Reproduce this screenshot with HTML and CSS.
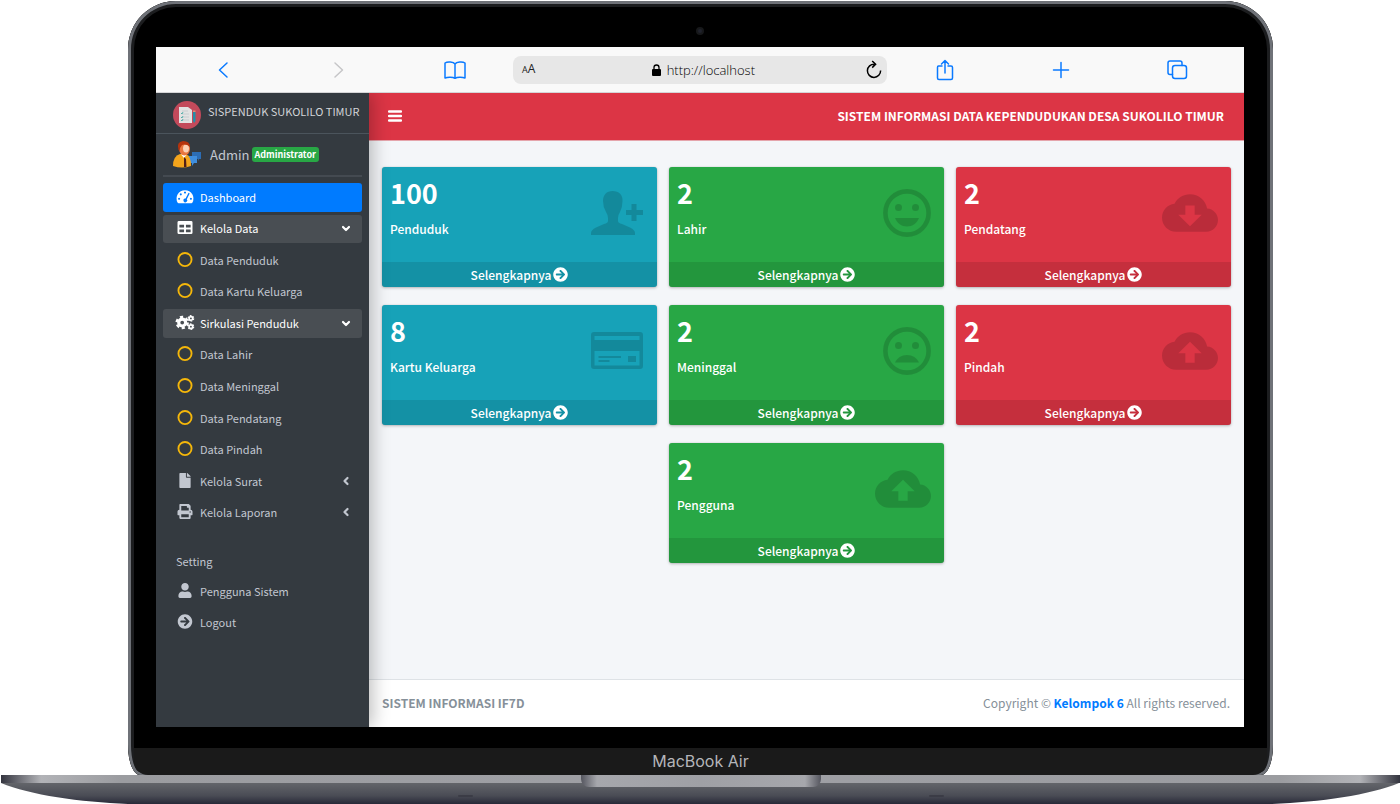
FILE: index.html
```html
<!DOCTYPE html>
<html lang="id">
<head>
<meta charset="utf-8">
<title>Sistem Informasi Data Kependudukan</title>
<meta name="viewport" content="width=device-width, initial-scale=1">
<link rel="stylesheet" href="styles.css">
</head>
<body>
<svg class="defs" aria-hidden="true">
  <symbol id="go" viewBox="0 0 512 512"><path d="M256 8c137 0 248 111 248 248S393 504 256 504 8 393 8 256 119 8 256 8zm-28.900 143.600l75.500 72.400H120c-13.300 0-24 10.700-24 24v16c0 13.300 10.700 24 24 24h182.600l-75.500 72.400c-9.700 9.300-9.900 24.800-.4 34.300l11 10.900c9.400 9.400 24.600 9.400 33.900 0L404.300 273c9.400-9.400 9.400-24.600 0-33.900L271.600 106.300c-9.400-9.400-24.600-9.400-33.900 0l-11 10.900c-9.500 9.600-9.300 25.100.4 34.400z"/></symbol>
  <symbol id="ring" viewBox="0 0 16 16"><circle cx="8" cy="8" r="7" fill="none" stroke="#f5b70a" stroke-width="2"/></symbol>
  <symbol id="down" viewBox="0 0 10 10"><path d="M2 4L5 7L8 4" fill="none" stroke="currentColor" stroke-width="2.200" stroke-linecap="round" stroke-linejoin="round"/></symbol>
  <symbol id="left" viewBox="0 0 10 10"><path d="M6.500 2L3.500 5L6.500 8" fill="none" stroke="currentColor" stroke-width="2.200" stroke-linecap="round" stroke-linejoin="round"/></symbol>
  <symbol id="cloud-up" viewBox="0 4 24 16"><path fill-rule="evenodd" d="M19.350 10.040C18.670 6.590 15.640 4 12 4 9.110 4 6.600 5.640 5.350 8.040 2.340 8.360 0 10.910 0 14c0 3.310 2.690 6 6 6h13c2.760 0 5-2.240 5-5 0-2.640-2.050-4.780-4.650-4.960zM14 13v4h-4v-4H7l5-5 5 5h-3z"/></symbol>
  <symbol id="cloud-down" viewBox="0 4 24 16"><path fill-rule="evenodd" d="M19.350 10.040C18.670 6.590 15.640 4 12 4 9.110 4 6.600 5.640 5.350 8.040 2.340 8.360 0 10.910 0 14c0 3.310 2.690 6 6 6h13c2.760 0 5-2.240 5-5 0-2.640-2.050-4.780-4.650-4.960zM17 12.700l-5 5-5-5h3V8.800h4v3.900h3z"/></symbol>
</svg>

<div class="laptop">
  <div class="lid">
    <div class="bezel">
      <div class="camera-row"><span class="camera"></span></div>
      <div class="screen">

        <div class="browser">
          <button class="tool" aria-label="Kembali"><svg width="24" height="24" viewBox="0 0 24 24"><path d="M16 5L8.500 12L16 19"/></svg></button>
          <button class="tool tool-off" aria-label="Maju" disabled><svg width="24" height="24" viewBox="0 0 24 24"><path d="M8 5L15.500 12L8 19"/></svg></button>
          <button class="tool" aria-label="Bookmark"><svg width="24" height="24" viewBox="0 0 24 24"><path d="M12 6C10.500 3.800 4.500 3.300 2 5V20C4.500 18.800 10 18.800 12 20.300C14 18.800 19.500 18.800 22 20V5C19.500 3.300 13.500 3.800 12 6V20"/></svg></button>
          <div class="address">
            <button class="text-size" aria-label="Ukuran teks"><small>A</small>A</button>
            <label class="url"><svg width="9" height="12" viewBox="0 0 9 12"><rect y="5" width="9" height="7" rx="1" fill="#000"/><path d="M2 6V3.500a2.500 2.500 0 0 1 5 0V6" fill="none" stroke="#000" stroke-width="1.300"/></svg><input class="url-input" type="text" value="http://localhost" aria-label="Alamat"></label>
            <button class="reload" aria-label="Muat ulang"><svg width="18" height="20" viewBox="0 0 18 20"><path d="M9.500 4.200A6.600 6.600 0 1 0 15.600 10.500M7.200 1L10.600 4.300L7.200 7.600" fill="none" stroke="#000" stroke-width="1.500"/></svg></button>
          </div>
          <button class="tool" aria-label="Bagikan"><svg width="24" height="24" viewBox="0 0 24 24"><path d="M9 8H5.500Q4.500 8 4.500 9.500V20Q4.500 21.500 6 21.500H18Q19.500 21.500 19.500 20V9.500Q19.500 8 18 8H15M12 15V2.500M8.500 6L12 2.500L15.500 6"/></svg></button>
          <button class="tool" aria-label="Tab baru"><svg width="24" height="24" viewBox="0 0 24 24"><path d="M4.500 12H19.500M12 4.500V19.500"/></svg></button>
          <button class="tool" aria-label="Semua tab"><svg width="24" height="24" viewBox="0 0 24 24"><rect x="7.500" y="7.500" width="14" height="13" rx="2.500"/><path d="M7.500 16.500H5Q3 16.500 3 14.500V5Q3 3 5 3H15Q17 3 17 5V7.500"/></svg></button>
        </div>

        <div class="app">
          <aside class="sidebar">
            <a class="brand" href="#">
              <svg width="28" height="28" viewBox="0 0 28 28"><circle cx="14" cy="14" r="14" fill="#c34a5b"/><path d="M6 6H15L19 9V22H6Z" fill="#e3e3e3"/><path d="M9 10H15M9 13H16M9 16H16M9 19H16" stroke="#c9cdd0" stroke-width="1"/><path d="M8 12l1 1 1-2M8 16l1 1 1-2M8 19l1 1 1-2" fill="none" stroke="#3aa5a0" stroke-width=".8"/><path d="M20 11h2.500v9l-1.200 2-1.300-2z" fill="#268fa8"/><path d="M20 9.500h2.500V11H20z" fill="#e58b74"/></svg>
              <span>SISPENDUK SUKOLILO TIMUR</span>
            </a>
            <div class="user">
              <svg width="28" height="28" viewBox="0 0 28 28"><path d="M19 11h9v7h-2l-1 2v-2h-6z" fill="#2c6db5"/><path d="M15 15h9v7h-3l-2 3v-3h-4z" fill="#3f8ede"/><path d="M0 25Q0 15 7 13H13Q18 15 18 25Q9 28 0 25Z" fill="#f4a51c"/><path d="M8 13.500L11 17L14 13.500Z" fill="#fff"/><path d="M11 16L13 18L13.500 26H11Z" fill="#532016"/><ellipse cx="11.500" cy="8" rx="5.500" ry="6.500" fill="#e8763f"/><ellipse cx="13" cy="7.500" rx="3" ry="4" fill="#fbd0b4"/><path d="M5.500 9Q3 1 10 0Q17 0 17 6Q13 2.500 9 4Q7 6 6.500 10Z" fill="#b5330d"/></svg>
              <a class="user-name" href="#">Admin</a><span class="role">Administrator</span>
            </div>
            <nav class="menu" aria-label="Menu utama">
              <a class="item item-active" href="#"><svg class="mi" viewBox="0 0 20 16"><path fill-rule="evenodd" d="M10 1.200a9 9 0 0 0-7.800 13.500q.3.500.9.500H16.900q.6 0 .9-.5A9 9 0 0 0 10 1.200zM10 2.600a1.100 1.100 0 1 0 .01 0zM5.500 4.600a1.100 1.100 0 1 0 .01 0zM3.700 9.200a1.100 1.100 0 1 0 .01 0zM16.300 9.200a1.100 1.100 0 1 0 .01 0zM13.800 4.100L10.600 10.200A2 2 0 1 0 11.900 11L15 4.800z"/></svg>Dashboard</a>
              <a class="item item-open" href="#"><svg class="mi" viewBox="0 0 20 16"><path fill-rule="evenodd" d="M3.500 1h13q1.500 0 1.500 1.500v11q0 1.500-1.500 1.500h-13Q2 15 2 13.500v-11Q2 1 3.500 1zM4 5v3h5V5zM11 5v3h5V5zM4 10v3h5v-3zM11 10v3h5v-3z"/></svg>Kelola Data<svg class="caret"><use href="#down"/></svg></a>
              <a class="item" href="#"><svg class="mi"><use href="#ring"/></svg>Data Penduduk</a>
              <a class="item" href="#"><svg class="mi"><use href="#ring"/></svg>Data Kartu Keluarga</a>
              <a class="item item-open" href="#"><svg class="mi" viewBox="0 0 20 16"><g fill="none" stroke="currentColor"><circle cx="7" cy="8" r="3.700" stroke-width="3.400"/><circle cx="7" cy="8" r="6" stroke-width="2.400" stroke-dasharray="3.400 2.883"/><circle cx="16.300" cy="3.600" r="1.900" stroke-width="1.800"/><circle cx="16.300" cy="3.600" r="3" stroke-width="1.200" stroke-dasharray="1.800 1.342"/><circle cx="16.300" cy="12.400" r="1.900" stroke-width="1.800"/><circle cx="16.300" cy="12.400" r="3" stroke-width="1.200" stroke-dasharray="1.800 1.342"/></g></svg>Sirkulasi Penduduk<svg class="caret"><use href="#down"/></svg></a>
              <a class="item" href="#"><svg class="mi"><use href="#ring"/></svg>Data Lahir</a>
              <a class="item" href="#"><svg class="mi"><use href="#ring"/></svg>Data Meninggal</a>
              <a class="item" href="#"><svg class="mi"><use href="#ring"/></svg>Data Pendatang</a>
              <a class="item" href="#"><svg class="mi"><use href="#ring"/></svg>Data Pindah</a>
              <a class="item" href="#"><svg class="mi" viewBox="0 0 384 512"><path d="M224 136V0H24C10.700 0 0 10.700 0 24v464c0 13.300 10.700 24 24 24h336c13.300 0 24-10.700 24-24V160H248c-13.200 0-24-10.800-24-24zm160-14.100v6.100H256V0h6.100c6.400 0 12.500 2.500 17 7l97.900 98c4.500 4.500 7 10.600 7 16.900z"/></svg>Kelola Surat<svg class="caret"><use href="#left"/></svg></a>
              <a class="item" href="#"><svg class="mi" viewBox="0 0 512 512"><path d="M448 192V77.250c0-8.490-3.370-16.620-9.370-22.630L393.370 9.370c-6-6-14.140-9.370-22.630-9.370H96C78.330 0 64 14.330 64 32v160c-35.350 0-64 28.650-64 64v112c0 8.840 7.160 16 16 16h48v96c0 17.670 14.330 32 32 32h320c17.670 0 32-14.330 32-32v-96h48c8.840 0 16-7.160 16-16V256c0-35.350-28.650-64-64-64zm-64 256H128v-96h256v96zm0-224H128V64h192v48c0 8.840 7.160 16 16 16h48v96zm48 72c-13.250 0-24-10.750-24-24 0-13.260 10.750-24 24-24s24 10.740 24 24c0 13.250-10.750 24-24 24z"/></svg>Kelola Laporan<svg class="caret"><use href="#left"/></svg></a>
            </nav>
            <h2 class="menu-title">Setting</h2>
            <nav class="menu menu-setting" aria-label="Setting">
              <a class="item" href="#"><svg class="mi" viewBox="0 0 448 512"><path d="M224 256c70.700 0 128-57.300 128-128S294.700 0 224 0 96 57.300 96 128s57.300 128 128 128zm89.600 32h-16.700c-22.200 10.200-46.900 16-72.900 16s-50.600-5.800-72.900-16h-16.700C60.200 288 0 348.200 0 422.400V464c0 26.500 21.500 48 48 48h352c26.500 0 48-21.500 48-48v-41.600c0-74.200-60.200-134.400-134.400-134.400z"/></svg>Pengguna Sistem</a>
              <a class="item" href="#"><svg class="mi"><use href="#go"/></svg>Logout</a>
            </nav>
          </aside>

          <div class="page">
            <header class="navbar">
              <button class="burger" aria-label="Menu"><svg width="14" height="14" viewBox="0 0 14 14"><path d="M1 2.500H13M1 7H13M1 11.500H13" stroke="#fff" stroke-width="2.400" stroke-linecap="round"/></svg></button>
              <strong class="navbar-title">SISTEM INFORMASI DATA KEPENDUDUKAN DESA SUKOLILO TIMUR</strong>
            </header>
            <main class="cards">
              <section class="card teal">
                <div class="card-main"><div class="card-text"><h3 class="count">100</h3><p class="label">Penduduk</p></div>
                  <svg class="card-icon" width="54" height="46" viewBox="0 0 54 46"><path d="M22.500 1C29 1 33 5 32.500 11Q32.500 17 30 22Q28 25 28 28V31Q28 33 32 34L40 37.500Q45 40 45 43V45H1V43Q1 40 6 37.500L14 34Q18 33 18 31V28Q18 25 16 22Q13 17 13 11C13 5 16.500 1 22.500 1Z"/><path d="M41.500 14h5v6H53v5h-6.500v6h-5v-6H36v-5h5.500z"/></svg></div>
                <a class="more" href="#">Selengkapnya <svg class="go"><use href="#go"/></svg></a>
              </section>
              <section class="card green">
                <div class="card-main"><div class="card-text"><h3 class="count">2</h3><p class="label">Lahir</p></div>
                  <svg class="card-icon" width="48" height="48" viewBox="0 0 48 48"><circle cx="24" cy="24" r="21.600" fill="none" stroke="#000" stroke-width="4.600"/><circle cx="15.500" cy="18.500" r="3.500"/><circle cx="32.500" cy="18.500" r="3.500"/><path d="M12 29H36C34 34 29.500 37.500 24 37.500S14 34 12 29Z"/></svg></div>
                <a class="more" href="#">Selengkapnya <svg class="go"><use href="#go"/></svg></a>
              </section>
              <section class="card red">
                <div class="card-main"><div class="card-text"><h3 class="count">2</h3><p class="label">Pendatang</p></div>
                  <svg class="card-icon" width="56" height="38"><use href="#cloud-down"/></svg></div>
                <a class="more" href="#">Selengkapnya <svg class="go"><use href="#go"/></svg></a>
              </section>
              <section class="card teal">
                <div class="card-main"><div class="card-text"><h3 class="count">8</h3><p class="label">Kartu Keluarga</p></div>
                  <svg class="card-icon" width="54" height="38" viewBox="0 0 54 38"><path fill-rule="evenodd" d="M4 0H50Q53 0 53 3V34Q53 37 50 37H4Q1 37 1 34V3Q1 0 4 0ZM4.500 4V8H49.500V4ZM4.500 19V33.500H49.500V19Z"/><path d="M8.500 24H31V26H8.500ZM8.500 28H19.500V30H8.500ZM38 24H46V30H38Z"/></svg></div>
                <a class="more" href="#">Selengkapnya <svg class="go"><use href="#go"/></svg></a>
              </section>
              <section class="card green">
                <div class="card-main"><div class="card-text"><h3 class="count">2</h3><p class="label">Meninggal</p></div>
                  <svg class="card-icon" width="48" height="48" viewBox="0 0 48 48"><circle cx="24" cy="24" r="21.600" fill="none" stroke="#000" stroke-width="4.600"/><circle cx="15.500" cy="18.500" r="3.500"/><circle cx="32.500" cy="18.500" r="3.500"/><path d="M12 35.500H36C34 31 29.500 28 24 28S14 31 12 35.500Z"/></svg></div>
                <a class="more" href="#">Selengkapnya <svg class="go"><use href="#go"/></svg></a>
              </section>
              <section class="card red">
                <div class="card-main"><div class="card-text"><h3 class="count">2</h3><p class="label">Pindah</p></div>
                  <svg class="card-icon" width="56" height="38"><use href="#cloud-up"/></svg></div>
                <a class="more" href="#">Selengkapnya <svg class="go"><use href="#go"/></svg></a>
              </section>
              <section class="card green card-middle">
                <div class="card-main"><div class="card-text"><h3 class="count">2</h3><p class="label">Pengguna</p></div>
                  <svg class="card-icon" width="56" height="38"><use href="#cloud-up"/></svg></div>
                <a class="more" href="#">Selengkapnya <svg class="go"><use href="#go"/></svg></a>
              </section>
            </main>
            <footer class="footer"><strong>SISTEM INFORMASI IF7D</strong><span>Copyright © <a href="#">Kelompok 6</a> All rights reserved.</span></footer>
          </div>
        </div>
      </div>
    </div>
    <div class="chin">MacBook Air</div>
  </div>
  <div class="base">
    <div class="deck"><span class="notch"></span></div>
    <svg class="underside" viewBox="0 0 1400 21" preserveAspectRatio="none" aria-hidden="true">
      <defs><linearGradient id="metal" x1="0" y1="0" x2="0" y2="1"><stop offset="0" stop-color="#63656a"/><stop offset=".6" stop-color="#4a4c55"/><stop offset="1" stop-color="#282938"/></linearGradient></defs>
      <path d="M1 0H1399C1370 12 1320 19 1272 21H128C80 19 30 12 1 0Z" fill="url(#metal)"/>
      <path d="M459 13H472M930 13H943" stroke="#3b3c46" stroke-width="2" stroke-linecap="round"/>
    </svg>
  </div>
</div>
</body>
</html>
```
FILE: styles.css
```css
* { box-sizing: border-box; }
body {
  margin: 0;
  background: #fff;
  font-family: "Noto Sans CJK SC", "Open Sans", sans-serif;
  font-size: 12px;
  line-height: 20px;
}
a { color: inherit; text-decoration: none; }
button { border: 0; padding: 0; background: none; font: inherit; color: inherit; }
h2, h3, p { margin: 0; font-weight: 400; }
svg { display: block; flex: none; }
.defs { position: absolute; width: 0; height: 0; }

/* Laptop body */
.laptop { display: flex; flex-direction: column; min-height: 100vh; padding-top: 1px; }
.lid {
  flex: 1;
  display: flex;
  flex-direction: column;
  margin: 0 127px 0 128px;
  padding: 0 6px;
  border-radius: 48px 48px 12px 12px / 48px 48px 30px 30px;
  background: #000;
  box-shadow: inset 0 0 0 3px #6f7278, inset 0 0 0 6px #1c1d1f;
  overflow: hidden;
}
.bezel { flex: 1; display: flex; flex-direction: column; padding: 0 23px 21px 22px; }
.camera-row { display: flex; justify-content: center; align-items: center; height: 46px; padding-top: 14px; }
.camera { width: 8px; height: 8px; border-radius: 50%; background: #20222c; border: 2px solid #17181a; }
.screen { flex: 1; display: flex; flex-direction: column; background: #f4f6f9; }
.chin {
  height: 27px;
  border-radius: 0 0 14px 14px;
  background: #1a1a1a;
  color: #b4b5b9;
  font: 16px/27px Inter, sans-serif;
  text-align: center;
}
.deck {
  display: flex;
  justify-content: center;
  height: 8px;
  margin: 0 0 0 1px;
  background: linear-gradient(90deg, #34353f 0, #b2b3b7 40px, #9b9ca0 120px, #9fa0a5 50%, #9b9ca0 calc(100% - 120px), #b2b3b7 calc(100% - 40px), #34353f);
}
.notch {
  position: relative;
  width: 240px;
  height: 12px;
  border-radius: 0 0 8px 8px;
  background: linear-gradient(90deg, #55565f, #a6a7ac 16px, #9fa0a5 50%, #a6a7ac calc(100% - 16px), #55565f);
}
.underside { width: 100%; height: 21px; }

/* Browser toolbar */
.browser {
  display: grid;
  grid-template-columns: repeat(3, 1fr) minmax(0, 374px) repeat(3, 1fr);
  align-items: center;
  height: 46px;
  padding: 0 9px;
  background: #f9f9f9;
  border-bottom: 1px solid #d5d5d7;
}
.tool { display: flex; justify-content: center; }
.tool svg { fill: none; stroke: #0a7aff; stroke-width: 1.5; stroke-linecap: round; stroke-linejoin: round; }
.tool-off svg { stroke: #c6c6c8; }
.address {
  display: flex;
  align-items: center;
  justify-content: space-between;
  height: 28px;
  padding: 0 4px 0 9px;
  border-radius: 8px;
  background: #e7e7e7;
  color: #222;
  font-family: "Open Sans", sans-serif;
}
.text-size { font-size: 12px; }
.text-size small { font-size: 9px; }
.url { display: flex; align-items: center; gap: 6px; padding-left: 8px; }
.url-input { width: 90px; padding: 0; border: 0; background: none; color: #000; font: 300 13px/20px "Open Sans", sans-serif; }

/* Sidebar */
.app { flex: 1; display: flex; overflow: hidden; }
.sidebar {
  position: relative;
  width: 213px;
  flex: none;
  background: #343a40;
  color: #c2c7d0;
  font-size: 11px;
  box-shadow: 4px 0 16px rgba(0, 0, 0, .25);
}
.brand { display: flex; align-items: center; gap: 7px; height: 41px; padding: 3px 0 0 17px; border-bottom: 1px solid #4b545c; color: #d3d5d8; white-space: nowrap; }
.brand span { padding-bottom: 8px; }
.user { display: flex; align-items: center; height: 43px; margin: 0 7px; padding-left: 10px; border-bottom: 2px solid #444a51; }
.user-name { margin-left: 9px; font-size: 13px; }
.role { margin-left: 2px; padding: 0 3px; border-radius: 3px; background: #28a745; color: #fff; font-size: 9px; font-weight: 700; line-height: 15px; }
.menu { display: grid; grid-auto-rows: 1fr; gap: 3px; height: 344px; margin: 6px 7px 0; }
.item { display: flex; align-items: center; border-radius: 3px; padding: 0 11px 1px 12px; }
.mi { width: 20px; height: 15px; margin: 0 5px 1px 0; fill: currentColor; }
.caret { width: 10px; height: 10px; margin-left: auto; }
.item-active { background: #007bff; color: #fff; }
.item-open { background: #494e53; color: #fff; }
.menu-title { margin: 24px 0 0 20px; font-size: 11px; line-height: 20px; }
.menu-setting { height: 60px; }

/* Page */
.page { flex: 1; min-width: 0; display: flex; flex-direction: column; }
.navbar { display: flex; align-items: center; justify-content: space-between; height: 48px; padding: 0 20px 1px 19px; background: #dc3545; border-bottom: 1px solid #e5a5ac; color: #fff; }
.cards { flex: 1; display: grid; grid-template-columns: repeat(3, 1fr); align-content: start; gap: 18px 12px; padding: 26px 13px; }
.card { border-radius: 3px; color: #fff; overflow: hidden; box-shadow: 0 0 1px rgba(0, 0, 0, .2), 0 1px 3px rgba(0, 0, 0, .25); }
.card-middle { grid-column: 2; }
.card-main { display: flex; align-items: center; justify-content: space-between; height: 95px; padding: 0 13px 3px 8px; }
.card-text { align-self: flex-start; padding-top: 6px; }
.count { font-size: 27px; font-weight: 700; line-height: 40px; }
.label { margin-top: 6px; font-weight: 500; }
.card-icon { opacity: .15; }
.more { display: flex; align-items: center; justify-content: center; gap: 2px; height: 25px; background: rgba(0, 0, 0, .1); font-weight: 500; }
.go { width: 15px; height: 15px; fill: #fff; }
.teal { background: #17a2b8; }
.green { background: #28a745; }
.red { background: #dc3545; }
.footer { display: flex; align-items: center; justify-content: space-between; height: 48px; padding: 0 14px 1px 13px; background: #fff; border-top: 1px solid #dee2e6; color: #869099; }
.footer a { color: #007bff; font-weight: 700; }
```
